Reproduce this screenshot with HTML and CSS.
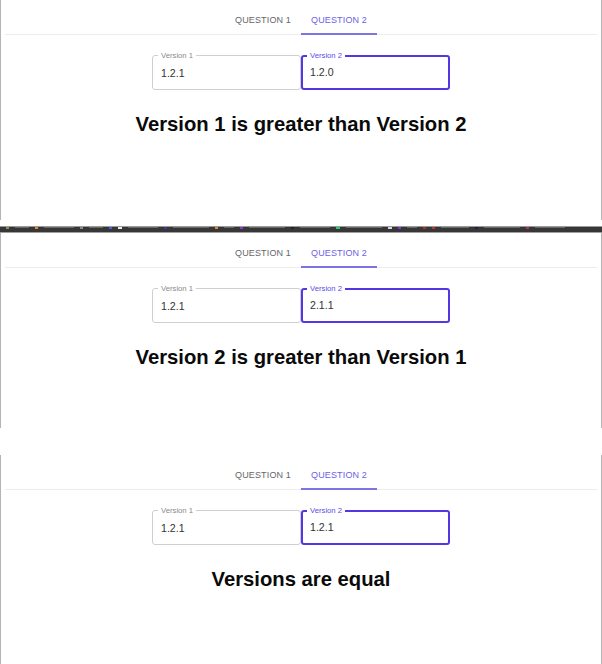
FILE: index.html
```html
<!DOCTYPE html>
<html lang="en">
<head>
<meta charset="utf-8">
<title>Version compare</title>
<link rel="stylesheet" href="styles.css">
</head>
<body>
<div class="page">
  <section class="shot shot-1">
    <nav class="tabs">
      <div class="tab">QUESTION 1</div>
      <div class="tab active">QUESTION 2</div>
    </nav>
    <div class="fields">
      <fieldset class="field">
        <legend>Version 1</legend>
        <div class="value">1.2.1</div>
      </fieldset>
      <fieldset class="field focused">
        <legend>Version 2</legend>
        <div class="value">1.2.0</div>
      </fieldset>
    </div>
    <h2 class="result">Version 1 is greater than Version 2</h2>
  </section>

  <div class="strip">
    <span class="speck" style="margin-left:6px;background:#9a8a50"></span>
    <span class="dash" style="width:14px"></span>
    <span class="speck" style="background:#e08a20"></span>
    <span class="dash" style="width:30px"></span>
    <span class="speck" style="background:#8a8a8a"></span>
    <span class="dash" style="width:14px"></span>
    <span class="speck" style="background:#4a5ae8"></span>
    <span class="speck" style="background:#e8ecff;width:4px"></span>
    <span class="dash" style="width:30px"></span>
    <span class="speck" style="background:#3a3aa8"></span>
    <span class="dash" style="width:36px"></span>
    <span class="speck" style="background:#e08a20"></span>
    <span class="dash" style="width:10px"></span>
    <span class="speck" style="background:#9a30e0"></span>
    <span class="dash" style="width:36px"></span>
    <span class="speck" style="background:#222"></span>
    <span class="dash" style="width:30px"></span>
    <span class="speck" style="background:#20d070;width:4px"></span>
    <span class="dash" style="width:36px"></span>
    <span class="speck" style="background:#d8d8d8;width:4px"></span>
    <span class="speck" style="background:#8a30f0"></span>
    <span class="dash" style="width:10px"></span>
    <span class="speck" style="background:#c02828"></span>
    <span class="speck" style="background:#c83030"></span>
    <span class="dash" style="width:28px"></span>
    <span class="speck" style="background:#202050"></span>
    <span class="dash" style="width:36px"></span>
    <span class="speck" style="background:#c03040"></span>
    <span class="dash" style="width:30px"></span>
  </div>

  <section class="shot shot-2">
    <nav class="tabs">
      <div class="tab">QUESTION 1</div>
      <div class="tab active">QUESTION 2</div>
    </nav>
    <div class="fields">
      <fieldset class="field">
        <legend>Version 1</legend>
        <div class="value">1.2.1</div>
      </fieldset>
      <fieldset class="field focused">
        <legend>Version 2</legend>
        <div class="value">2.1.1</div>
      </fieldset>
    </div>
    <h2 class="result">Version 2 is greater than Version 1</h2>
  </section>

  <section class="shot shot-3">
    <nav class="tabs">
      <div class="tab">QUESTION 1</div>
      <div class="tab active">QUESTION 2</div>
    </nav>
    <div class="fields">
      <fieldset class="field">
        <legend>Version 1</legend>
        <div class="value">1.2.1</div>
      </fieldset>
      <fieldset class="field focused">
        <legend>Version 2</legend>
        <div class="value">1.2.1</div>
      </fieldset>
    </div>
    <h2 class="result">Versions are equal</h2>
  </section>
</div>
</body>
</html>
```

FILE: styles.css
```css
html, body {
  margin: 0;
  padding: 0;
  background: #ffffff;
}

body {
  width: 602px;
  height: 664px;
  overflow: hidden;
  font-family: "Liberation Sans", Arial, sans-serif;
  color: #111;
}

.page {
  display: flex;
  flex-direction: column;
}

.shot {
  display: flex;
  flex-direction: column;
  align-items: center;
  border-left: 1px solid #b4b4b4;
  border-right: 1px solid #b4b4b4;
  background: #fff;
  box-sizing: border-box;
}

.shot-1 { height: 220px; }
.shot-2 { height: 195px; }
.shot-3 { height: 209px; margin-top: 27px; }

.tabs {
  align-self: stretch;
  margin: 0 4px;
  height: 34px;
  border-bottom: 1px solid #ececec;
  display: flex;
  justify-content: center;
}

.tab {
  width: 76px;
  height: 35px;
  margin-bottom: -1px;
  box-sizing: border-box;
  padding-top: 5px;
  display: flex;
  align-items: center;
  justify-content: center;
  font-size: 9px;
  letter-spacing: 0.15px;
  color: #666;
}

.tab.active {
  color: #6a5fe6;
  box-shadow: inset 0 -2px 0 #7c74e2;
}

.fields {
  display: flex;
  margin-top: 16px;
}

.field {
  width: 149px;
  box-sizing: border-box;
  margin: 0;
  padding: 0 5px 6px;
  border: 1px solid #cfcfcf;
  border-radius: 3px;
  min-width: 0;
}

.field legend {
  font-size: 7.7px;
  line-height: 9px;
  padding: 0 3px;
  color: #8a8a8a;
}

.field.focused {
  border: 2px solid #5238e4;
  padding: 0 4px 5px;
}

.field.focused legend {
  color: #5c4ce8;
}

.value {
  font-size: 10.6px;
  line-height: 20px;
  margin-top: 3px;
  padding-left: 3px;
  color: #333;
}

.field.focused .value {
  margin-top: 2px;
}

.result {
  margin: 23px 0 0;
  font-size: 20.25px;
  line-height: 23px;
  font-weight: bold;
  color: #0a0a0a;
}

.strip {
  margin-top: 6px;
  height: 7px;
  box-sizing: border-box;
  border-top: 1px solid #9a9a9a;
  border-bottom: 1px solid #a0a0a0;
  background: #373737;
  display: flex;
  align-items: flex-start;
  gap: 6px;
}

.speck {
  width: 3px;
  height: 2px;
}

.dash {
  height: 1px;
  background: #6a6a6a;
}
```
